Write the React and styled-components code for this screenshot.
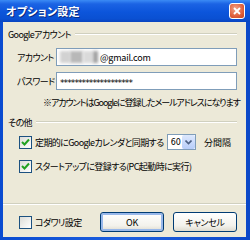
import React from 'react';
import styled, { createGlobalStyle } from 'styled-components';

const Global = createGlobalStyle`
  html, body { margin: 0; padding: 0; background: #fff; }
  body {
    font-family: "Noto Sans CJK JP", "DejaVu Sans", sans-serif;
    font-feature-settings: "palt";
  }
`;

const Window = styled.div`
  width: 250px;
  height: 240px;
  box-sizing: border-box;
  display: flex;
  flex-direction: column;
  background: linear-gradient(90deg, #0a4bd0, #1c5fe0 50%, #0b48c8);
  padding: 0 4px 3px 3px;
  overflow: hidden;
`;

const TitleBar = styled.div`
  height: 22px;
  margin: 0 -4px 0 -3px;
  padding: 0 5px 0 6px;
  display: flex;
  align-items: center;
  justify-content: space-between;
  background: linear-gradient(#3b8bf5 0%, #1b63e4 18%, #0c55db 55%, #0a50d2 85%, #0944c0 100%);
`;

const Title = styled.span`
  color: #fff;
  font-size: 11px;
  font-weight: bold;
  letter-spacing: 0.3px;
  text-shadow: 1px 1px 0 #0a2a80;
`;

const CloseButton = styled.div`
  width: 14px;
  height: 14px;
  border: 1px solid #fff;
  border-radius: 3px;
  background: radial-gradient(circle at 40% 35%, #f2a48a, #e0603c 60%, #c1421f);
  display: flex;
  align-items: center;
  justify-content: center;
`;

const Body = styled.div`
  flex: 1;
  background: #ece9d8;
  display: flex;
  flex-direction: column;
  padding: 5px 9px 0 5px;
  font-size: 9px;
  letter-spacing: -0.6px;
  color: #000;
`;

const Legend = styled.div`
  display: flex;
  align-items: center;
  gap: 4px;
  height: 14px;
  margin-top: ${p => p.$top || 0}px;
  white-space: nowrap;
  &::after {
    content: '';
    flex: 1;
    height: 0;
    border-top: 1px solid #d0d0bf;
    border-bottom: 1px solid #fff;
  }
`;

const Section = styled.div`
  display: flex;
  flex-direction: column;
`;

const FieldRow = styled.div`
  display: flex;
  align-items: center;
  height: 18px;
  margin-top: ${p => p.$top}px;
  padding-left: 9px;
`;

const Label = styled.span`
  width: 39px;
  white-space: nowrap;
`;

const TextBox = styled.div`
  flex: 1;
  height: 18px;
  box-sizing: border-box;
  border: 1px solid #7f9db9;
  background: #fff;
  display: flex;
  align-items: center;
  padding-left: 3px;
  overflow: hidden;
  white-space: nowrap;
  letter-spacing: -0.2px;
`;

const Blur = styled.span`
  display: inline-block;
  width: ${p => p.$w}px;
  height: 12px;
  background: ${p => p.$c};
  filter: blur(1.5px);
`;

const Stars = styled.span`
  font-family: "DejaVu Sans", sans-serif;
  font-size: 9px;
  letter-spacing: -0.9px;
  padding-top: 4px;
`;

const Note = styled.div`
  margin-top: 6px;
  padding-left: 35px;
  white-space: nowrap;
  letter-spacing: -1.05px;
`;

const CheckRow = styled.div`
  display: flex;
  align-items: center;
  gap: 3px;
  height: 16px;
  margin-top: ${p => p.$top}px;
  padding-left: ${p => p.$left ?? 11}px;
  white-space: nowrap;
`;

const Box = styled.span`
  width: 11px;
  height: 11px;
  border: 1px solid #1c5180;
  background: linear-gradient(135deg, #dcdcd7, #fff);
  display: flex;
  align-items: center;
  justify-content: center;
  flex-shrink: 0;
`;

const Select = styled.div`
  width: 39px;
  height: 16px;
  box-sizing: border-box;
  border: 1px solid #7f9db9;
  background: #fff;
  display: flex;
  align-items: center;
  margin-left: auto;
  font-family: "DejaVu Sans", sans-serif;
  font-size: 8px;
  letter-spacing: 0;
  padding-left: 3px;
`;

const SelectValue = styled.span`
  flex: 1;
`;

const SelectArrow = styled.span`
  width: 13px;
  height: 14px;
  border-radius: 2px;
  background: linear-gradient(#dde8fd, #b7cdf9);
  display: flex;
  align-items: center;
  justify-content: center;
`;

const Unit = styled.span`
  margin-left: 5px;
  margin-right: 6px;
  letter-spacing: 0;
`;

const Separator = styled.div`
  margin: 29px -9px 0 -5px;
  border-top: 1px solid #d0d0bf;
  border-bottom: 1px solid #fff;
`;

const Footer = styled.div`
  display: flex;
  align-items: center;
  margin-top: 7px;
`;

const Buttons = styled.div`
  margin-left: auto;
  display: flex;
  gap: 9px;
`;

const Button = styled.div`
  width: 64px;
  height: 20px;
  box-sizing: border-box;
  border: 1px solid #003c74;
  border-radius: 3px;
  background: linear-gradient(#fff, #f3f2ec 70%, #dedbcf);
  display: flex;
  align-items: center;
  justify-content: center;
  letter-spacing: -0.3px;
  box-shadow: ${p => (p.$default ? 'inset 0 0 0 2px #98b8ea' : 'none')};
`;

const Check = () => (
  <svg width="9" height="9" viewBox="0 0 9 9">
    <path d="M1 4 L3.5 6.5 L8 1.5" fill="none" stroke="#21a121" strokeWidth="2" />
  </svg>
);

export default function App() {
  return (
    <>
      <Global />
      <Window>
        <TitleBar>
          <Title>オプション設定</Title>
          <CloseButton>
            <svg width="8" height="8" viewBox="0 0 8 8">
              <path d="M1 1 L7 7 M7 1 L1 7" stroke="#fff" strokeWidth="1.8" />
            </svg>
          </CloseButton>
        </TitleBar>
        <Body>
          <Legend>Googleアカウント</Legend>
          <Section>
            <FieldRow $top={7}>
              <Label>アカウント</Label>
              <TextBox>
                <Blur $w={10} $c="#d2d2d2" />
                <Blur $w={13} $c="#b8b8b8" />
                <Blur $w={10} $c="#dadada" />
                <Blur $w={5} $c="#a0a0a0" />
                <span style={{ marginLeft: 2 }}>@gmail.com</span>
              </TextBox>
            </FieldRow>
            <FieldRow $top={6}>
              <Label>パスワード</Label>
              <TextBox>
                <Stars>********************</Stars>
              </TextBox>
            </FieldRow>
            <Note>※アカウントはGoogleに登録したメールアドレスになります</Note>
          </Section>
          <Legend $top={6}>その他</Legend>
          <CheckRow $top={5}>
            <Box><Check /></Box>
            定期的にGoogleカレンダと同期する
            <Select>
              <SelectValue>60</SelectValue>
              <SelectArrow>
                <svg width="7" height="5" viewBox="0 0 7 5">
                  <path d="M0.5 0.5 L3.5 3.5 L6.5 0.5" fill="none" stroke="#4d6185" strokeWidth="1.6" />
                </svg>
              </SelectArrow>
            </Select>
            <Unit>分間隔</Unit>
          </CheckRow>
          <CheckRow $top={8}>
            <Box><Check /></Box>
            スタートアップに登録する(PC起動時に実行)
          </CheckRow>
          <Separator />
          <Footer>
            <CheckRow $top={0} $left={11}>
              <Box />
              コダワリ設定
            </CheckRow>
            <Buttons>
              <Button $default>OK</Button>
              <Button>キャンセル</Button>
            </Buttons>
          </Footer>
        </Body>
      </Window>
    </>
  );
}
